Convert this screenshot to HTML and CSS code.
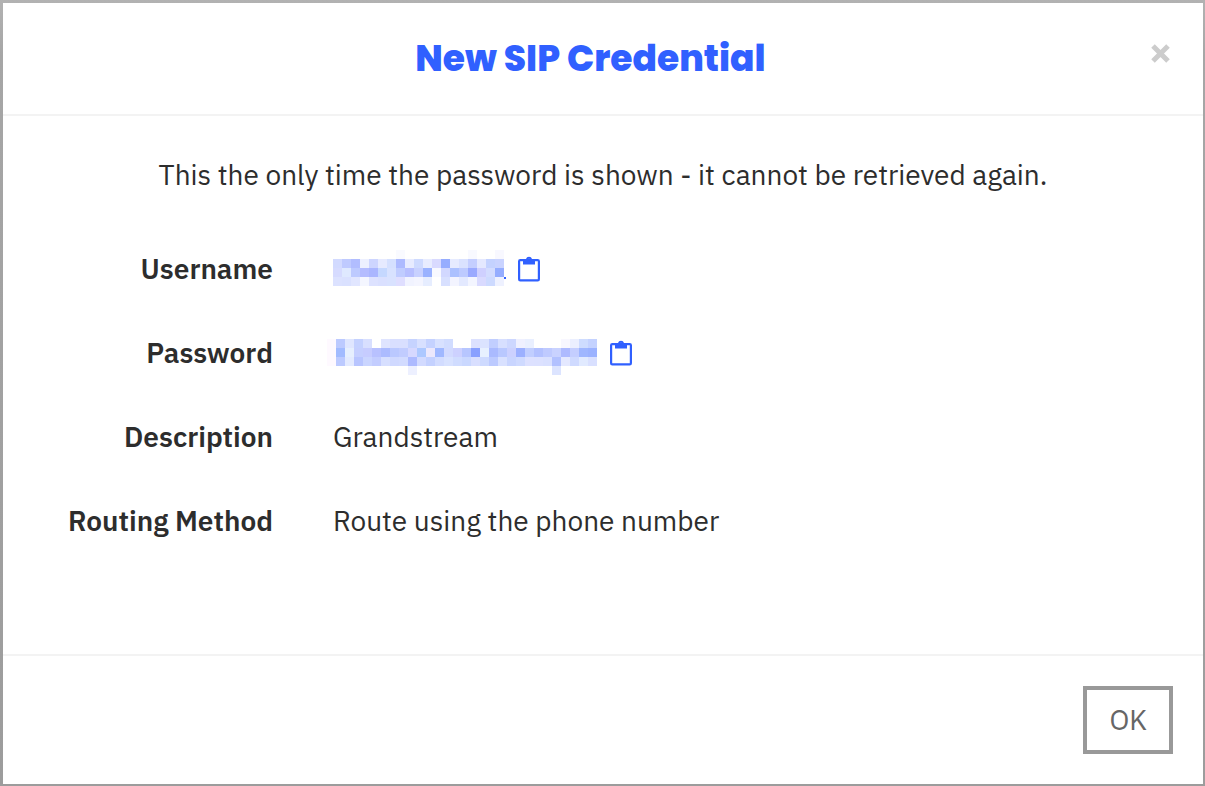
FILE: index.html
```html
<!DOCTYPE html>
<html lang="en">

<head>
  <meta charset="UTF-8">
  <meta name="viewport" content="width=device-width, initial-scale=1.0">
  <title>New SIP Credential</title>
  <link rel="stylesheet" href="styles.css">
</head>

<body>
  <div class="modal" role="dialog" aria-labelledby="modal-title">
    <header class="modal-header">
      <h1 class="modal-title" id="modal-title">New SIP Credential</h1>
      <button class="close" type="button" aria-label="Close">
        <svg width="19" height="19" viewBox="0 0 19 19">
          <path d="M2 2 L17 17 M17 2 L2 17" stroke="#ccc" stroke-width="5" />
        </svg>
      </button>
    </header>

    <main class="modal-body">
      <p class="notice">This the only time the password is shown - it cannot be retrieved again.</p>

      <dl class="details">
        <dt>Username</dt>
        <dd>
          <svg class="masked" id="username"></svg>
          <button class="copy" type="button" aria-label="Copy username">
            <svg width="22" height="26" viewBox="0 0 22 26">
              <rect x="1.1" y="4.1" width="19.8" height="20.3" rx="1.2" fill="none" stroke="#3060ff" stroke-width="2.2" />
              <path fill="#3060ff" fill-rule="evenodd" d="M5 3h3a3.1 3.1 0 0 1 6 0h3v5.500h-12zM11 2.800a1 1 0 1 0 0 2a1 1 0 1 0 0-2z" />
            </svg>
          </button>
        </dd>

        <dt>Password</dt>
        <dd>
          <svg class="masked masked-wide" id="password"></svg>
          <button class="copy" type="button" aria-label="Copy password">
            <svg width="22" height="26" viewBox="0 0 22 26">
              <rect x="1.1" y="4.1" width="19.8" height="20.3" rx="1.2" fill="none" stroke="#3060ff" stroke-width="2.2" />
              <path fill="#3060ff" fill-rule="evenodd" d="M5 3h3a3.1 3.1 0 0 1 6 0h3v5.500h-12zM11 2.800a1 1 0 1 0 0 2a1 1 0 1 0 0-2z" />
            </svg>
          </button>
        </dd>

        <dt>Description</dt>
        <dd>Grandstream</dd>

        <dt>Routing Method</dt>
        <dd>Route using the phone number</dd>
      </dl>
    </main>

    <footer class="modal-footer">
      <button class="btn" type="button">OK</button>
    </footer>
  </div>

  <script src="script.js"></script>
</body>

</html>
```

FILE: styles.css
```css
* {
  box-sizing: border-box;
}

body {
  display: flex;
  min-height: 100vh;
  margin: 0;
  padding: 3px 2px 2px 3px;
  background: linear-gradient(#b2b2b2, #a6a6a6 56px, #9c9c9c);
  color: #2d2d2d;
  font-family: "IBM Plex Sans", Inter, sans-serif;
  font-size: 28px;
  line-height: 40px;
}

.modal {
  display: flex;
  flex: 1;
  flex-direction: column;
  background-color: #fff;
}

.modal-header {
  display: flex;
  align-items: flex-start;
  padding: 30px 30px 29px;
  border-bottom: 2px solid #f3f3f3;
}

.modal-title {
  flex: 1;
  margin: 0;
  color: #3060ff;
  font-family: Poppins, Inter, sans-serif;
  font-size: 36px;
  font-weight: 800;
  line-height: 52px;
  text-align: center;
}

.close {
  display: flex;
  justify-content: flex-end;
  width: 25px;
  padding: 11px 3px 0 0;
  border: none;
  background: none;
  cursor: pointer;
}

.modal-body {
  flex: 1;
}

.notice {
  margin: 39px 30px 54px;
  text-align: center;
}

.details {
  display: grid;
  grid-template-columns: 25% 75%;
  row-gap: 44px;
  margin: 0 0 54px;
}

.details dt {
  padding-right: 30px;
  font-weight: 600;
  text-align: right;
}

.details dd {
  display: flex;
  align-items: center;
  height: 40px;
  margin: 0;
  padding-left: 30px;
}

.masked {
  width: 173px;
  height: 38px;
}

.masked-wide {
  width: 270px;
  height: 36px;
  margin-top: 8px;
  margin-right: 1px;
  margin-left: -6px;
}

.copy {
  display: flex;
  margin-left: 12px;
  padding: 0;
  border: none;
  background: none;
  cursor: pointer;
}

.modal-footer {
  display: flex;
  justify-content: flex-end;
  padding: 30px;
  border-top: 2px solid #f3f3f3;
}

.btn {
  height: 68px;
  padding: 0 22px;
  border: 4px solid #999;
  background-color: #fff;
  color: #666;
  font: inherit;
  cursor: pointer;
}
```

FILE: script.js
```js
const CELL = 9;

// one row per line, '-' is an empty cell
const masks = {
  username: [
    '- - - - - - - f9faff - - - - - - - f8f9ff - - f8f8ff',
    'd2daff bfcaff b1bdff edf0ff cdd5ff e6eaff d5e0ff adbaff e7ebff cedaff e8ecff d9daff 96adff e6ebff dae2ff c4ceff e4e8ff c4d2ff c9d3ff',
    'd6dbff dfe9ff bdcaff b4bcff aab6ff c5d8ff d8e2ff c0ccff b7bfff c8d1ff 9ab2ff f8f9ff d2d8ff acc1ff bdcaff 9aa9ff cfd0ff d3dcff 95adff',
    'dce2ff dae1ff e1e6ff f4f6ff dde2ff dae0ff d9e2ff dfdeff f1f3ff f4f5ff e6edff - d8e0ff f3f4ff e3e9ff f3f5ff d9daff cddaff eef1ff'
  ],
  password: [
    'fef9ff bccaff dfe6ff c4d1ff d8dfff - dfe4ff d9dfff d9dfff c6d3ff d8e0ff c5d2ff d8e1ff d1dcff - - dce1ff dbe3ff c1ceff d7dfff cdd7ff eff0ff e9efff - - - f8f7ff ebefff cedcff c4d2ff',
    'fef9ff a2bbff e6effe c5cfff c6ccff b8c1ff acbbff bac8ff c1ccff d6d8ff adc8ff ece8fc a0b8ff d2daff cdd1ff b7c6ff 89a0ff e7f0ff aabaff b9c8ff ccd1ff 9cb0ff c1ceff b3c1ff bfcaff c9d2ff aebaff c4ceff 9fb6ff 9bb2ff',
    'fef9ff bccaff e3eaff b8c5ff cad5ff c3cdff d7dfff d0d9ff d2dbff adbaff d2daff c4d1ff d2dcff d8e2ff d0dcff cad8ff d9dfff cedaff bccaff d9e1ff c9d5ff cfdaff dde1ff dce1ff d9e0ff b2c1ff e4e8ff cfdaff e1eaff d9e0ff',
    '- - - - - - - - - edf0ff - - - - - - - - - - - - - - - dce4ff'
  ]
};

function addRect(svg, x, y, width, height, fill) {
  const rect = document.createElementNS('http://www.w3.org/2000/svg', 'rect');
  rect.setAttribute('x', x);
  rect.setAttribute('y', y);
  rect.setAttribute('width', width);
  rect.setAttribute('height', height);
  rect.setAttribute('fill', fill);
  svg.append(rect);
}

Object.keys(masks).forEach((id) => {
  const svg = document.getElementById(id);
  masks[id].forEach((row, y) => {
    row.split(' ').forEach((color, x) => {
      if (color !== '-') {
        addRect(svg, x * CELL, y * CELL, CELL, CELL, '#' + color);
      }
    });
  });
});

addRect(document.getElementById('username'), 171, 27, 2, 2, '#3060ff');
```
